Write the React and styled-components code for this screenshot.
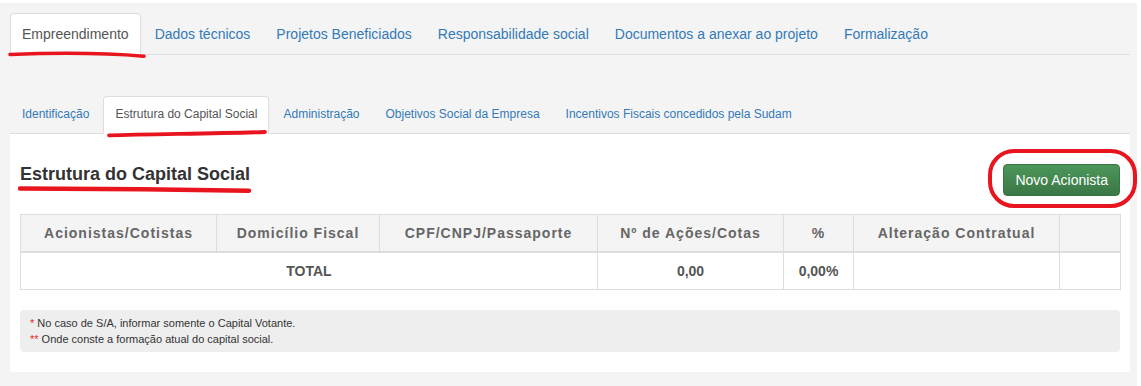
import React from 'react';
import styled, { createGlobalStyle } from 'styled-components';

const GlobalStyle = createGlobalStyle`
  * { box-sizing: border-box; }
  body {
    margin: 0;
    background: #fff;
    font-family: "Liberation Sans", Arial, sans-serif;
    color: #333;
  }
`

const Page = styled.div`
  margin-top: 3px;
  width: 1137px;
  min-height: 383px;
  background: #f4f4f4;
  padding: 10px 7px 0 10px;
`

const Tabs = styled.ul`
  display: flex;
  list-style: none;
  margin: ${p => (p.$sub ? '41px 0 0' : '0')};
  padding: 0;
  border-bottom: 1px solid #ddd;
`

const Tab = styled.li`
  position: relative;
  margin: 0 2px -1px 0;
  padding: ${p => (p.$sub ? '9px 11px 10px' : '10px 11px')};
  font-size: ${p => (p.$sub ? '12px' : '14px')};
  line-height: ${p => (p.$sub ? '17px' : '20px')};
  border: 1px solid transparent;
  border-radius: 4px 4px 0 0;
  color: #337ab7;
  white-space: nowrap;
  cursor: pointer;
  ${p => p.$active && `
    color: #555;
    background: #fff;
    border-color: #ddd #ddd transparent;
  `}
`

const Panel = styled.div`
  background: #fff;
  padding: 30px 10px 20px;
`

const HeaderRow = styled.div`
  display: flex;
  justify-content: space-between;
  align-items: flex-start;
`

const Title = styled.h2`
  position: relative;
  margin: 0;
  font-size: 18px;
  line-height: 20px;
  font-weight: bold;
  color: #333;
`

const Button = styled.button`
  position: relative;
  font-family: inherit;
  font-size: 14px;
  line-height: 18px;
  padding: 6px 11px;
  color: #fff;
  background: linear-gradient(to bottom, #4c975a 0%, #3a7746 100%);
  border: 1px solid #3a7546;
  border-radius: 4px;
  cursor: pointer;
`

const Table = styled.table`
  width: 100%;
  margin-top: 18px;
  border-collapse: collapse;
  table-layout: fixed;
  border: 1px solid #ddd;
`

const Th = styled.th`
  padding: 8px;
  line-height: 20px;
  font-size: 14px;
  font-weight: bold;
  letter-spacing: 1px;
  color: #666;
  background: #f4f4f4;
  border: 1px solid #ddd;
  border-bottom: 2px solid #ddd;
  text-align: center;
  white-space: nowrap;
`

const Td = styled.td`
  padding: 8px;
  line-height: 20px;
  font-size: 14px;
  font-weight: bold;
  color: #555;
  border: 1px solid #ddd;
  text-align: center;
`

const Notes = styled.div`
  margin-top: 20px;
  background: #eee;
  border-radius: 4px;
  padding: 5px 10px;
  font-size: 11px;
  line-height: 16px;
  color: #333;
`

const Star = styled.span`
  color: #e8262b;
`

const Scribble = styled.svg`
  position: absolute;
  left: ${p => p.$left}px;
  top: ${p => p.$top}px;
  width: ${p => p.$w}px;
  height: ${p => p.$h}px;
  overflow: visible;
  pointer-events: none;
  fill: none;
  stroke: #e8151f;
  stroke-linecap: round;
`

const mainTabs = [
  'Empreendimento',
  'Dados técnicos',
  'Projetos Beneficiados',
  'Responsabilidade social',
  'Documentos a anexar ao projeto',
  'Formalização',
];

const subTabs = [
  'Identificação',
  'Estrutura do Capital Social',
  'Administração',
  'Objetivos Social da Empresa',
  'Incentivos Fiscais concedidos pela Sudam',
];

const columns = [
  { label: 'Acionistas/Cotistas', width: 196 },
  { label: 'Domicílio Fiscal', width: 163 },
  { label: 'CPF/CNPJ/Passaporte', width: 218 },
  { label: 'Nº de Ações/Cotas', width: 186 },
  { label: '%', width: 70 },
  { label: 'Alteração Contratual', width: 206 },
  { label: '', width: 61 },
];

function App() {
  return (
    <>
      <GlobalStyle />
      <Page>
        <Tabs>
          {mainTabs.map((t, i) => (
            <Tab key={t} $active={i === 0}>
              {t}
              {i === 0 && (
                <Scribble $left={-3} $top={36} $w={140} $h={12}>
                  <path d="M2,4.5 C40,3 95,2.8 136,6.2" strokeWidth="3.6" />
                </Scribble>
              )}
            </Tab>
          ))}
        </Tabs>

        <Tabs $sub>
          {subTabs.map((t, i) => (
            <Tab key={t} $sub $active={i === 1}>
              {t}
              {i === 1 && (
                <Scribble $left={-1} $top={30} $w={170} $h={14}>
                  <path d="M6,8.3 C50,7 110,6.6 162,5" strokeWidth="3.8" />
                </Scribble>
              )}
            </Tab>
          ))}
        </Tabs>

        <Panel>
          <HeaderRow>
            <Title>
              Estrutura do Capital Social
              <Scribble $left={-2} $top={20} $w={240} $h={12}>
                <path d="M2,4.5 C70,4.5 160,5.5 231,6.8" strokeWidth="4.4" />
              </Scribble>
            </Title>
            <Button>
              Novo Acionista
              <Scribble $left={-16} $top={-16} $w={151} $h={61}>
                <rect x="2" y="2" width="145" height="55" rx="24" strokeWidth="4" />
              </Scribble>
            </Button>
          </HeaderRow>

          <Table>
            <colgroup>
              {columns.map((c, i) => (
                <col key={i} style={{ width: c.width }} />
              ))}
            </colgroup>
            <thead>
              <tr>
                {columns.map((c, i) => (
                  <Th key={i}>{c.label}</Th>
                ))}
              </tr>
            </thead>
            <tbody>
              <tr>
                <Td colSpan={3}>TOTAL</Td>
                <Td>0,00</Td>
                <Td>0,00%</Td>
                <Td></Td>
                <Td></Td>
              </tr>
            </tbody>
          </Table>

          <Notes>
            <div><Star>*</Star> No caso de S/A, informar somente o Capital Votante.</div>
            <div><Star>**</Star> Onde conste a formação atual do capital social.</div>
          </Notes>
        </Panel>
      </Page>
    </>
  );
}

export default App;
